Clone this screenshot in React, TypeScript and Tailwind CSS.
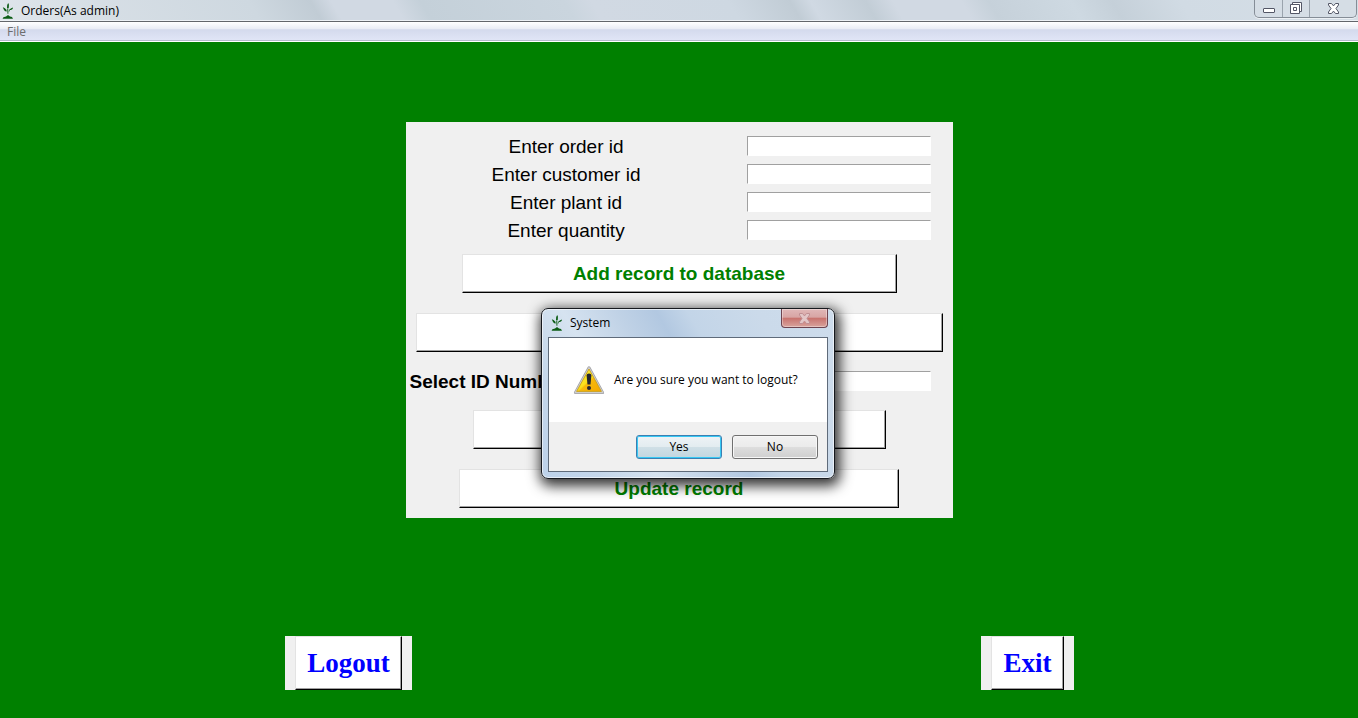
import React from 'react';

const face = 'border-t border-l border-t-[#e3e3e3] border-l-[#e3e3e3] border-b border-r border-b-black border-r-black bg-white shadow-[inset_-1px_-1px_0_#a0a0a0]';
const field = 'h-5 w-46 border-t border-l border-t-[#a0a0a0] border-l-[#a0a0a0] border-b border-r border-b-white border-r-white bg-white px-1 text-sm outline-none';

function PlantIcon() {
  return (
    <svg width="16" height="16" viewBox="0 0 16 16" fill="#0b5c14" aria-hidden="true">
      <path d="M8.200 0 8.900 1.500 8.800 4.800 7.800 6 7 4.800 7.200 2Z" />
      <path d="M2.800 4.200 4.600 5 6.400 6.800 6.800 8.600 5.200 8.200 4 7Z" />
      <path d="M13 4.400 12.600 6 11 7 9.800 7 9.400 8.600 8.400 8.600 9.400 6.400 11.200 5.200Z" />
      <path d="M7.300 6h.9l.2 4.800h-.9Z" />
      <path d="M2.600 15.800 3.400 14.200 6 13.600 8 12 10 13.600 12 14 13 15.800Z" />
    </svg>
  );
}

function CrossIcon({ fill, stroke }: { fill: string; stroke: string }) {
  return (
    <svg width="13" height="11" viewBox="0 0 13 11" aria-hidden="true">
      <path
        d="M1.500 .5h3l2 2.400 2-2.400h3v1.500L9 5.500l2.500 3.500v1.500h-3l-2-2.400-2 2.400h-3V9L4 5.500 1.500 2Z"
        fill={fill}
        stroke={stroke}
        strokeWidth="1"
        strokeLinejoin="round"
      />
    </svg>
  );
}

function WarningIcon() {
  return (
    <svg width="32" height="32" viewBox="0 0 32 32" aria-hidden="true">
      <defs>
        <linearGradient id="warn" x1="0" y1="0" x2="1" y2="1">
          <stop offset="0" stopColor="#fff04a" />
          <stop offset="0.5" stopColor="#fbe01a" />
          <stop offset="0.55" stopColor="#f7b90c" />
          <stop offset="1" stopColor="#f5a800" />
        </linearGradient>
      </defs>
      <path d="M16 3.800 29.600 28.600H2.400Z" fill="#c9c9c9" stroke="#a2a2a6" strokeWidth="3" strokeLinejoin="round" />
      <path d="M16 3.800 29.600 28.600H2.400Z" fill="#cdcdcd" stroke="#cdcdcd" strokeWidth="1.500" strokeLinejoin="round" />
      <path d="M16 5 28.400 27.400H3.600Z" fill="url(#warn)" stroke="#c79a10" strokeWidth="0.800" strokeLinejoin="round" />
      <path d="M13.600 11.500Q13.600 9.500 16 9.500T18.400 11.500L17.500 20.500H14.500Z" fill="#26262e" />
      <circle cx="16" cy="24" r="2" fill="#26262e" />
    </svg>
  );
}

function TitleBar() {
  return (
    <header className="flex h-[22px] justify-between border-b border-[#63666b] bg-[linear-gradient(60deg,#dfe5eb_0%,#d6dee5_8%,#ced8e0_19%,#c1ccd5_23.5%,#d1d9e3_25%,#d1d9e3_29.500%,#c4d0d9_31.500%,#cad5de_42%,#d1d9e3_44%,#ced8e2_54%,#c1ccd5_58.500%,#d0d9e3_60%,#c2cdd6_64%,#d1d9e3_66%,#d1d9e3_71%,#c6d1da_73%,#ced9e2_79%,#c5d0d9_82%,#d1dbe4_87%,#d5dee6_100%)] shadow-[inset_0_-1px_0_#edf1f5]">
      <div className="flex items-center gap-[5px]">
        <PlantIcon />
        <h1 className="font-['Open_Sans','Noto_Sans',sans-serif] text-[12px] leading-5 text-black">Orders(As admin)</h1>
      </div>
      <div className="mr-px flex h-[18px] overflow-hidden rounded-b-[5px] border border-t-0 border-[#858d97] bg-[#d5dde5] shadow-[0_1px_0_#edf1f5]">
        <button type="button" aria-label="Minimize" className="flex w-[27px] items-end justify-center pb-1">
          <svg width="12" height="5" viewBox="0 0 12 5" aria-hidden="true">
            <rect x="0.500" y="0.500" width="11" height="4" rx="0.500" fill="#fff" stroke="#535666" />
          </svg>
        </button>
        <button type="button" aria-label="Restore" className="flex w-[27px] items-start justify-center border-l border-[#9aa3ad] pt-[2px] pr-px">
          <svg width="12" height="12" viewBox="0 0 12 12" fill="#fff" stroke="#535666" aria-hidden="true">
            <path d="M2.500 .5h9v9h-9Z" />
            <path d="M.5 2.500h9v9h-9Z" />
            <path d="M3.500 5.500h3v3h-3Z" />
          </svg>
        </button>
        <button type="button" aria-label="Close" className="flex w-[47px] items-start justify-center border-l border-[#9aa3ad] pt-[3px]">
          <CrossIcon fill="#ffffff" stroke="#535666" />
        </button>
      </div>
    </header>
  );
}

function Field({ id, label }: { id: string; label: string }) {
  return (
    <div className="grid h-7 grid-cols-[7fr_5fr] items-center">
      <label htmlFor={id} className="pt-[2px] pl-[2px] text-center">{label}</label>
      <div className="flex justify-center">
        <input id={id} type="text" className={field} />
      </div>
    </div>
  );
}

function LogoutDialog() {
  return (
    <div
      role="dialog"
      aria-labelledby="dialog-title"
      className="absolute top-[308px] left-[541px] w-[294px] rounded-[7px] border border-[#16191e] bg-[linear-gradient(60deg,#bdd2ea_0%,#c4d6ea_15%,#d6e3f0_30%,#c0d2e6_44%,#b2c8e1_54%,#c3d5e8_62%,#cbdaea_80%,#cddcec_100%)] px-[6px] pb-[6px] font-['Open_Sans','Noto_Sans',sans-serif] text-[12px] text-black shadow-[inset_0_0_0_1px_rgba(255,255,255,0.6),2px_4px_13px_3px_rgba(0,0,0,0.8)]"
    >
      <div className="flex h-7 justify-between">
        <div className="flex items-center gap-[5px] pl-px">
          <PlantIcon />
          <h2 id="dialog-title">System</h2>
        </div>
        <button
          type="button"
          aria-label="Close"
          className="flex h-[19px] w-[47px] items-center justify-center rounded-b-[4px] border border-t-0 border-[#6d4450] bg-[linear-gradient(#e0b8b8_0%,#d8a5a4_45%,#c8746f_52%,#d9a39d_100%)] shadow-[inset_0_0_0_1px_rgba(255,255,255,0.35)]"
        >
          <CrossIcon fill="#e3c6c7" stroke="#c08f93" />
        </button>
      </div>
      <div className="border border-[#5f6b7a] bg-[#f0f0f0]">
        <div className="flex h-[84px] items-center gap-[9px] bg-white pl-6">
          <WarningIcon />
          <p className="whitespace-nowrap">Are you sure you want to logout?</p>
        </div>
        <div className="flex h-[49px] items-center justify-end gap-[10px] pr-[9px]">
          <button type="button" className="h-6 w-[86px] rounded-[3px] border border-[#3c7fb1] bg-[linear-gradient(#eef3f6_0%,#e3ecf0_48%,#cfdfe6_52%,#c2d6df_100%)] shadow-[inset_0_0_0_1px_#36c8f4]">
            Yes
          </button>
          <button type="button" className="h-6 w-[86px] rounded-[3px] border border-[#707070] bg-[linear-gradient(#f2f2f2_0%,#ebebeb_48%,#dddddd_52%,#cfcfcf_100%)] shadow-[inset_0_0_0_1px_#f7f7f7]">
            No
          </button>
        </div>
      </div>
    </div>
  );
}

export default function App() {
  const action = `h-[39px] text-[19px] font-bold text-[#008000] ${face}`;
  const serif = `h-[54px] px-[11px] font-['Liberation_Serif',serif] text-[27px] font-bold text-[#0000ff] ${face}`;
  return (
    <div className="relative flex min-h-screen flex-col bg-[#008000] font-['Liberation_Sans',Arial,sans-serif]">
      <TitleBar />
      <nav className="flex h-5 items-center border-b border-white bg-[linear-gradient(#ffffff_0%,#e8ebf4_38%,#d4daed_40%,#e0e5f6_94%,#b4bacb_95%,#b4bacb_100%)] pl-[7px]">
        <button type="button" className="font-['Open_Sans','Noto_Sans',sans-serif] text-[12px] leading-4 text-[#6d6d6d]">File</button>
      </nav>
      <main className="flex flex-1 flex-col items-center justify-between pt-20 pb-7">
        <form className="flex w-[547px] flex-col items-center bg-[#f0f0f0] pt-[10px] pb-[10px] text-[19px] leading-6 text-black">
          <div className="w-full">
            <Field id="order" label="Enter order id" />
            <Field id="customer" label="Enter customer id" />
            <Field id="plant" label="Enter plant id" />
            <Field id="quantity" label="Enter quantity" />
          </div>
          <button type="button" className={`mt-[10px] w-[435px] ${action}`}>Add record to database</button>
          <button type="button" className={`mt-5 w-[527px] ${action}`}>Show records</button>
          <div className="mt-[15px] grid h-7 w-full grid-cols-[7fr_5fr] items-center">
            <label htmlFor="select-id" className="pt-[2px] pl-1 font-bold">Select ID Number</label>
            <div className="flex justify-center">
              <input id="select-id" type="text" className={field} />
            </div>
          </div>
          <button type="button" className={`mt-[15px] w-[413px] ${action}`}>Delete record</button>
          <button type="button" className={`mt-5 w-[440px] ${action}`}>Update record</button>
        </form>
        <div className="grid w-full grid-cols-2">
          <div className="flex justify-center pl-[18px]">
            <div className="bg-[#f0f0f0] px-[10px]">
              <button type="button" className={serif}>Logout</button>
            </div>
          </div>
          <div className="flex justify-center pl-[18px]">
            <div className="bg-[#f0f0f0] px-[10px]">
              <button type="button" className={serif}>Exit</button>
            </div>
          </div>
        </div>
      </main>
      <LogoutDialog />
    </div>
  );
}
